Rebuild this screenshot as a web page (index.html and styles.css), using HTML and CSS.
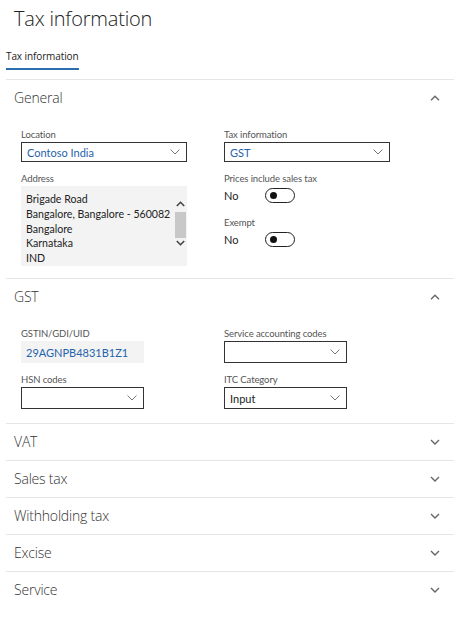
FILE: index.html
```html
<!DOCTYPE html>
<html>
<head>
<meta charset="utf-8">
<title>Tax information</title>
<link rel="stylesheet" href="styles.css">
</head>
<body>
<div class="page">
  <h1 class="title">Tax information</h1>
  <div class="tabstrip"><span class="tab">Tax information</span></div>

  <section class="fasttab">
    <div class="fasttab-head">
      <span class="fasttab-title">General</span>
      <svg class="chev" width="10" height="6" viewBox="0 0 10 6"><path d="M1 5.2 L5 1.2 L9 5.2" fill="none" stroke="#666" stroke-width="1.4"/></svg>
    </div>
    <div class="fasttab-body">
      <div class="col">
        <div class="field">
          <div class="label">Location</div>
          <div class="select w-wide h-20"><span class="val link">Contoso India</span><svg class="dd" width="10" height="6" viewBox="0 0 10 6"><path d="M0.5 0.5 L5 5 L9.5 0.5" fill="none" stroke="#777" stroke-width="1"/></svg></div>
        </div>
        <div class="field">
          <div class="label">Address</div>
          <div class="address">
            <div class="address-text">
              <div>Brigade Road</div>
              <div>Bangalore, Bangalore - 560082</div>
              <div>Bangalore</div>
              <div>Karnataka</div>
              <div>IND</div>
            </div>
            <div class="scrollbar">
              <div class="sb-btn sb-up"><svg width="9" height="6" viewBox="0 0 9 6"><path d="M0.8 5 L4.5 1.3 L8.2 5" fill="none" stroke="#444" stroke-width="1.6"/></svg></div>
              <div class="sb-thumb"></div>
              <div class="sb-btn sb-down"><svg width="9" height="6" viewBox="0 0 9 6"><path d="M0.8 1 L4.5 4.7 L8.2 1" fill="none" stroke="#444" stroke-width="1.6"/></svg></div>
            </div>
          </div>
        </div>
      </div>
      <div class="col">
        <div class="field">
          <div class="label">Tax information</div>
          <div class="select w-wide h-20"><span class="val link">GST</span><svg class="dd" width="10" height="6" viewBox="0 0 10 6"><path d="M0.5 0.5 L5 5 L9.5 0.5" fill="none" stroke="#777" stroke-width="1"/></svg></div>
        </div>
        <div class="field toggle-field">
          <div class="label">Prices include sales tax</div>
          <div class="toggle-row"><span class="toggle-text">No</span><span class="toggle"><span class="knob"></span></span></div>
        </div>
        <div class="field toggle-field">
          <div class="label">Exempt</div>
          <div class="toggle-row"><span class="toggle-text">No</span><span class="toggle"><span class="knob"></span></span></div>
        </div>
      </div>
    </div>
  </section>

  <section class="fasttab">
    <div class="fasttab-head">
      <span class="fasttab-title">GST</span>
      <svg class="chev" width="10" height="6" viewBox="0 0 10 6"><path d="M1 5.2 L5 1.2 L9 5.2" fill="none" stroke="#666" stroke-width="1.4"/></svg>
    </div>
    <div class="fasttab-body gst">
      <div class="col">
        <div class="field">
          <div class="label">GSTIN/GDI/UID</div>
          <div class="input w-narrow"><span class="val link">29AGNPB4831B1Z1</span></div>
        </div>
        <div class="field">
          <div class="label">HSN codes</div>
          <div class="select w-narrow h-22"><span class="val"></span><svg class="dd" width="10" height="6" viewBox="0 0 10 6"><path d="M0.5 0.5 L5 5 L9.5 0.5" fill="none" stroke="#777" stroke-width="1"/></svg></div>
        </div>
      </div>
      <div class="col">
        <div class="field">
          <div class="label">Service accounting codes</div>
          <div class="select w-narrow h-22"><span class="val"></span><svg class="dd" width="10" height="6" viewBox="0 0 10 6"><path d="M0.5 0.5 L5 5 L9.5 0.5" fill="none" stroke="#777" stroke-width="1"/></svg></div>
        </div>
        <div class="field">
          <div class="label">ITC Category</div>
          <div class="select w-narrow h-22"><span class="val">Input</span><svg class="dd" width="10" height="6" viewBox="0 0 10 6"><path d="M0.5 0.5 L5 5 L9.5 0.5" fill="none" stroke="#777" stroke-width="1"/></svg></div>
        </div>
      </div>
    </div>
  </section>

  <section class="fasttab">
    <div class="fasttab-head"><span class="fasttab-title">VAT</span><svg class="chev" width="10" height="6" viewBox="0 0 10 6"><path d="M1 1 L5 5 L9 1" fill="none" stroke="#666" stroke-width="1.4"/></svg></div>
  </section>
  <section class="fasttab">
    <div class="fasttab-head"><span class="fasttab-title">Sales tax</span><svg class="chev" width="10" height="6" viewBox="0 0 10 6"><path d="M1 1 L5 5 L9 1" fill="none" stroke="#666" stroke-width="1.4"/></svg></div>
  </section>
  <section class="fasttab">
    <div class="fasttab-head"><span class="fasttab-title">Withholding tax</span><svg class="chev" width="10" height="6" viewBox="0 0 10 6"><path d="M1 1 L5 5 L9 1" fill="none" stroke="#666" stroke-width="1.4"/></svg></div>
  </section>
  <section class="fasttab">
    <div class="fasttab-head"><span class="fasttab-title">Excise</span><svg class="chev" width="10" height="6" viewBox="0 0 10 6"><path d="M1 1 L5 5 L9 1" fill="none" stroke="#666" stroke-width="1.4"/></svg></div>
  </section>
  <section class="fasttab last">
    <div class="fasttab-head"><span class="fasttab-title">Service</span><svg class="chev" width="10" height="6" viewBox="0 0 10 6"><path d="M1 1 L5 5 L9 1" fill="none" stroke="#666" stroke-width="1.4"/></svg></div>
  </section>
</div>
</body>
</html>
```

FILE: styles.css
```css
* { box-sizing: border-box; }

html, body {
  margin: 0;
  padding: 0;
  background: #ffffff;
}

body {
  font-family: Lato, "Open Sans", sans-serif;
  color: #333333;
}

.page {
  width: 454px;
}

.title {
  margin: 0;
  padding: 5px 0 0 14px;
  font-family: "Open Sans", "Noto Sans", sans-serif;
  font-size: 20px;
  line-height: 28px;
  font-weight: 300;
  color: #222222;
  letter-spacing: -0.2px;
}

.tabstrip {
  display: flex;
  margin: 16px 0 0 6px;
  padding-bottom: 9px;
  border-bottom: 1px solid #e6e6e6;
}

.tab {
  display: block;
  font-family: "Open Sans", "Noto Sans", sans-serif;
  font-size: 10px;
  line-height: 15px;
  color: #222222;
  padding-bottom: 4px;
  border-bottom: 2px solid #2a6eb0;
  letter-spacing: -0.1px;
}

.fasttab {
  margin-left: 6px;
  border-bottom: 1px solid #e6e6e6;
}

.fasttab.last {
  border-bottom: none;
}

.fasttab-head {
  display: flex;
  align-items: center;
  justify-content: space-between;
  height: 36px;
  padding: 0 14px 0 8px;
}

.fasttab-title {
  font-family: "Open Sans", "Noto Sans", sans-serif;
  font-size: 14px;
  font-weight: 300;
  color: #333333;
  letter-spacing: -0.2px;
  margin-top: -2px;
}

.chev {
  display: block;
}

.fasttab-body {
  display: grid;
  grid-template-columns: 203px 203px;
  padding: 12px 0 12px 15px;
}

.fasttab-body.gst {
  padding-bottom: 14px;
}

.col {
  display: flex;
  flex-direction: column;
  gap: 10px;
}

.label {
  font-size: 9.5px;
  line-height: 13px;
  color: #555555;
  margin-bottom: 1px;
  letter-spacing: -0.1px;
}

.val {
  font-size: 11px;
  color: #222222;
  white-space: nowrap;
}

.val.link {
  color: #1f63ab;
}

.select {
  display: flex;
  align-items: center;
  justify-content: space-between;
  border: 1px solid #333333;
  padding: 0 6px 0 5px;
  background: #ffffff;
}

.w-wide { width: 166px; }
.w-narrow { width: 123px; }
.h-20 { height: 20px; }
.h-22 { height: 22px; }

.dd { display: block; flex: none; }

.input {
  display: flex;
  align-items: center;
  height: 22px;
  padding-left: 5px;
  background: #f3f3f3;
}

.address {
  display: flex;
  width: 166px;
  height: 80px;
  background: #f3f3f3;
  overflow: hidden;
}

.address-text {
  flex: 1;
  padding: 6px 0 0 5px;
  font-size: 10.6px;
  line-height: 14.8px;
  color: #222222;
  white-space: nowrap;
  overflow: hidden;
}

.scrollbar {
  flex: none;
  width: 11px;
  margin: 11px 1px 0 0;
  display: flex;
  flex-direction: column;
  align-items: center;
}

.sb-btn {
  width: 11px;
  display: flex;
  align-items: center;
  justify-content: center;
}

.sb-up { height: 13px; }
.sb-down { height: 10px; }

.sb-btn svg { display: block; }

.sb-thumb {
  width: 11px;
  height: 26px;
  margin-top: 2px;
  background: #c8c8c8;
}

.toggle-field {
  padding-bottom: 3px;
}

.toggle-row {
  display: flex;
  align-items: center;
  height: 15px;
  margin-top: 3px;
}

.toggle-text {
  width: 41px;
  font-size: 11px;
  color: #222222;
}

.toggle {
  display: flex;
  align-items: center;
  width: 30px;
  height: 15px;
  border: 1.3px solid #222222;
  border-radius: 8px;
  padding-left: 4px;
}

.knob {
  display: block;
  width: 7px;
  height: 7px;
  border-radius: 50%;
  background: #111111;
}
```
